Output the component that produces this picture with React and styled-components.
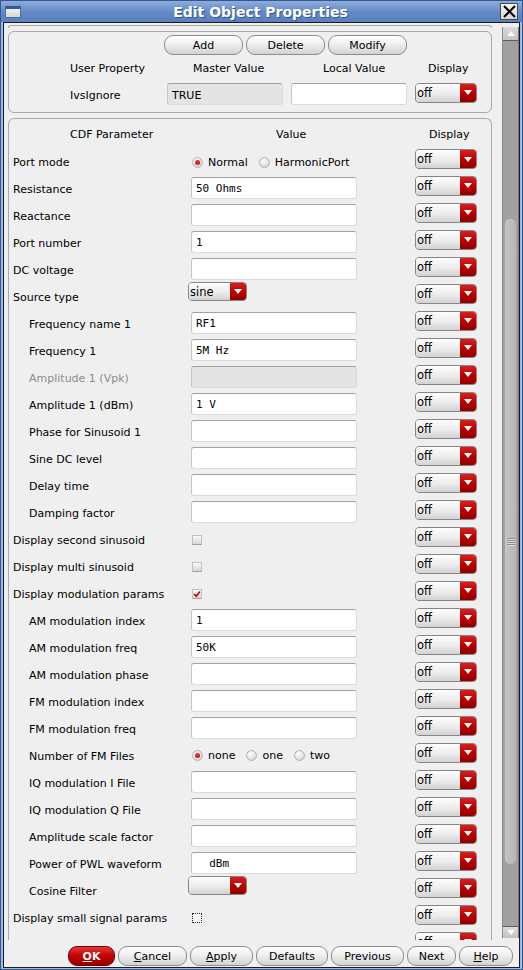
import React from 'react'
import styled, { createGlobalStyle, css } from 'styled-components'

const GlobalStyle = createGlobalStyle`
  html, body { margin: 0; padding: 0; }
  body {
    background: #efefef;
    font-family: "DejaVu Sans", "Liberation Sans", sans-serif;
    font-size: 11px;
    color: #000;
  }
  * { box-sizing: border-box; }
`

const Window = styled.div`
  width: 523px;
  height: 970px;
  display: flex;
  flex-direction: column;
  border: 1px solid #33578f;
  background: #9bb8e6;
  overflow: hidden;
`

const TitleBar = styled.div`
  height: 21px;
  flex: none;
  display: flex;
  align-items: center;
  padding: 0 4px 0 4px;
  background: linear-gradient(#8eacdc, #6388c6 55%, #5a80bf);
`

const WinIcon = styled.div`
  width: 16px;
  height: 12px;
  flex: none;
  border: 1px solid #4a6ea8;
  border-top: 3px solid #30599e;
  background: linear-gradient(#eef1ec, #d3dad0);
`

const Title = styled.div`
  flex: 1;
  text-align: center;
  color: #fff;
  font-weight: bold;
  font-size: 14px;
  text-shadow: 1px 1px 0 #33558c;
`

const CloseBox = styled.div`
  width: 18px;
  height: 17px;
  flex: none;
  display: flex;
  align-items: center;
  justify-content: center;
  background: linear-gradient(#f4f4f4, #d6d6d6);
  border: 1px solid #4a4a4a;
`

const Client = styled.div`
  flex: 1;
  min-height: 0;
  display: flex;
  flex-direction: column;
  margin: 0 2px 1px;
  border: 1px solid #1b1b1b;
  background: #efefef;
`

const Main = styled.div`
  flex: 1;
  min-height: 0;
  display: flex;
`

const Viewport = styled.div`
  flex: 1;
  overflow: hidden;
  padding: 2px 0 0 4px;
`

const TopEdge = styled.div`
  width: 484px;
  height: 3px;
  border: 1px solid #a9a9a9;
  border-bottom: none;
  border-radius: 5px 5px 0 0;
`

const Group = styled.div`
  width: 484px;
  border: 1px solid #a9a9a9;
  border-radius: 6px;
  margin-top: ${p => p.$top}px;
  padding: ${p => p.$pad};
  ${p => p.$open && css`
    border-bottom: none;
    border-radius: 6px 6px 0 0;
  `}
`

const ButtonRow = styled.div`
  display: flex;
  gap: 3px;
  padding-left: 155px;
`

const Pill = styled.button`
  height: 20px;
  width: ${p => p.$w}px;
  flex: none;
  padding: 0;
  font-family: inherit;
  font-size: 11px;
  color: #000;
  border: 1px solid #8d8d8d;
  border-radius: 9px;
  background: linear-gradient(#fefefe, #efefef 45%, #d2d2d2);
  cursor: pointer;
  u { text-decoration: underline; }
  ${p => p.$primary && css`
    color: #fff;
    font-weight: bold;
    border-color: #6e0000;
    background: linear-gradient(#e23a3a, #c40000 50%, #980000);
  `}
`

const PropGrid = styled.div`
  display: grid;
  grid-template-columns: 150px 116px 116px 62px;
  column-gap: 8px;
  align-items: center;
  height: ${p => p.$h}px;
  margin-top: ${p => p.$top}px;
`

const Head = styled.div`
  padding-left: ${p => p.$shift || 0}px;
  white-space: nowrap;
`

const PropLabel = styled.div`
  padding-left: 61px;
  margin-top: 2px;
`

const CdfRow = styled.div`
  display: grid;
  grid-template-columns: 178px 224px 62px;
  align-items: center;
  height: ${p => p.$h || 27}px;
  padding-left: 4px;
`

const RowLabel = styled.div`
  padding-left: ${p => (p.$indent ? 16 : 0)}px;
  margin-top: 3px;
  white-space: nowrap;
  color: ${p => (p.$disabled ? '#8c8c8c' : '#000')};
`

const Field = styled.div`
  width: ${p => p.$w || 166}px;
  height: 22px;
  display: flex;
  align-items: center;
  padding: 2px 4px 0;
  white-space: pre;
  font-family: ${p => (p.$sans ? '"DejaVu Sans", sans-serif' : '"DejaVu Sans Mono", monospace')};
  font-size: 11px;
  background: ${p => (p.$disabled ? '#e4e4e4' : '#fff')};
  border: 1px solid #dadada;
  border-top-color: #a2a2a2;
  border-left-color: #c6c6c6;
  border-radius: 3px;
`

const Combo = styled.div`
  width: ${p => p.$w}px;
  height: ${p => p.$h}px;
  display: flex;
  margin-bottom: ${p => p.$lift}px;
  margin-left: ${p => p.$nudge || 0}px;
  border: 1px solid #868686;
  border-radius: 4px;
  overflow: hidden;
`

const ComboText = styled.div`
  flex: 1;
  display: flex;
  align-items: center;
  padding-left: 1px;
  font-size: 11.5px;
  background: linear-gradient(#fdfdfd, #ececec 55%, #d2d2d2);
`

const ComboArrow = styled.div`
  width: 16px;
  display: flex;
  align-items: center;
  justify-content: center;
  background: linear-gradient(#d92020, #b80000 55%, #900000);
`

const Options = styled.div`
  display: flex;
  align-items: center;
  margin: 2px 0 0 1px;
`

const Option = styled.label`
  display: flex;
  align-items: center;
  gap: 5px;
  margin-right: 11px;
`

const Radio = styled.span`
  width: 11px;
  height: 11px;
  flex: none;
  border-radius: 50%;
  border: 1px solid #b4b4b4;
  background: radial-gradient(circle at 40% 35%, #ffffff, #e0e0e0 60%, #bdbdbd);
  display: flex;
  align-items: center;
  justify-content: center;
  &::after {
    content: '';
    width: 5px;
    height: 5px;
    border-radius: 50%;
    background: ${p => (p.$on ? 'radial-gradient(circle at 40% 35%, #ff3030, #c00000)' : 'transparent')};
  }
`

const Check = styled.span`
  width: 10px;
  height: 10px;
  margin: 2px 0 0 1px;
  display: flex;
  align-items: center;
  justify-content: center;
  background: linear-gradient(#fbfbfb, #d6d6d6);
  border: 1px solid #c0c0c0;
  border-bottom-color: #a2a2a2;
  ${p => p.$focus && css`
    border: 1px dotted #222;
    background: #f6f6f6;
  `}
`

const ScrollBar = styled.div`
  width: 17px;
  flex: none;
  margin: 4px 0 2px;
  border-left: 1px solid #8c8c8c;
  border-right: 1px solid #7a7a7a;
  display: flex;
  flex-direction: column;
`

const Arrow = styled.div`
  height: ${p => p.$h}px;
  flex: none;
  display: flex;
  align-items: center;
  justify-content: center;
  background: linear-gradient(#dcdcdc, #c2c2c2);
  border-${p => (p.$down ? 'top' : 'bottom')}: 1px solid #5e5e5e;
`

const Track = styled.div`
  flex: 1;
  padding-top: 177px;
  background: #a0a0a0;
`

const Thumb = styled.div`
  height: 647px;
  margin: 0 1px;
  border-radius: 7px;
  background: linear-gradient(90deg, #c4c4c4, #b6b6b6);
  border: 1px solid #a4a4a4;
  display: flex;
  flex-direction: column;
  align-items: center;
  justify-content: center;
  gap: 1px;
`

const Grip = styled.span`
  width: 8px;
  height: 1px;
  background: #8a8a8a;
  box-shadow: 0 1px 0 #e0e0e0;
`

const ButtonBar = styled.div`
  height: 27px;
  flex: none;
  display: flex;
  justify-content: flex-end;
  align-items: flex-start;
  gap: 3px;
  padding: 6px 6px 0 0;
`

const Tri = ({ up }) => (
  <svg width="8" height="5" viewBox="0 0 8 5">
    <path d={up ? 'M0 5h8L4 0z' : 'M0 0h8L4 5z'} fill="#fff" />
  </svg>
)

const Dropdown = ({ value = 'off', w = 62, h = 20, lift = 4, nudge }) => (
  <Combo $w={w} $h={h} $lift={lift} $nudge={nudge}>
    <ComboText>{value}</ComboText>
    <ComboArrow><Tri /></ComboArrow>
  </Combo>
)

const Tick = () => (
  <svg width="11" height="10" viewBox="0 0 11 10">
    <path d="M1.5 5 L4.5 8 L9.5 1.5" stroke="#c80000" strokeWidth="2.2" fill="none" />
  </svg>
)

const rows = [
  { label: 'Port mode', kind: 'radio', options: ['Normal', 'HarmonicPort'] },
  { label: 'Resistance', value: '50 Ohms' },
  { label: 'Reactance' },
  { label: 'Port number', value: '1' },
  { label: 'DC voltage' },
  { label: 'Source type', kind: 'select', value: 'sine' },
  { label: 'Frequency name 1', indent: true, value: 'RF1' },
  { label: 'Frequency 1', indent: true, value: '5M Hz' },
  { label: 'Amplitude 1 (Vpk)', indent: true, disabled: true },
  { label: 'Amplitude 1 (dBm)', indent: true, value: '1 V' },
  { label: 'Phase for Sinusoid 1', indent: true },
  { label: 'Sine DC level', indent: true },
  { label: 'Delay time', indent: true },
  { label: 'Damping factor', indent: true },
  { label: 'Display second sinusoid', kind: 'check' },
  { label: 'Display multi sinusoid', kind: 'check' },
  { label: 'Display modulation params', kind: 'check', checked: true },
  { label: 'AM modulation index', indent: true, value: '1' },
  { label: 'AM modulation freq', indent: true, value: '50K' },
  { label: 'AM modulation phase', indent: true },
  { label: 'FM modulation index', indent: true },
  { label: 'FM modulation freq', indent: true },
  { label: 'Number of FM Files', indent: true, kind: 'radio', options: ['none', 'one', 'two'] },
  { label: 'IQ modulation I File', indent: true },
  { label: 'IQ modulation Q File', indent: true },
  { label: 'Amplitude scale factor', indent: true },
  { label: 'Power of PWL waveform', indent: true, value: '  dBm' },
  { label: 'Cosine Filter', indent: true, kind: 'select', value: '' },
  { label: 'Display small signal params', kind: 'check', focus: true },
  { label: '', kind: 'check' },
]

const ValueCell = ({ row }) => {
  if (row.kind === 'radio') {
    return (
      <Options>
        {row.options.map((o, i) => (
          <Option key={o}><Radio $on={i === 0} />{o}</Option>
        ))}
      </Options>
    )
  }
  if (row.kind === 'select') {
    return <Dropdown value={row.value} w={59} h={19} lift={8} nudge={-3} />
  }
  if (row.kind === 'check') {
    return <Check $focus={row.focus}>{row.checked && <Tick />}</Check>
  }
  return <Field $disabled={row.disabled}>{row.value || ''}</Field>
}

const footer = [
  { text: 'OK', w: 47, primary: true, u: 'O' },
  { text: 'Cancel', w: 69, u: 'C' },
  { text: 'Apply', w: 63, u: 'A' },
  { text: 'Defaults', w: 72 },
  { text: 'Previous', w: 73 },
  { text: 'Next', w: 49 },
  { text: 'Help', w: 54, u: 'H' },
]

export default function App() {
  return (
    <>
      <GlobalStyle />
      <Window>
        <TitleBar>
          <WinIcon />
          <Title>Edit Object Properties</Title>
          <CloseBox>
            <svg width="13" height="13" viewBox="0 0 13 13">
              <path d="M1 1L12 12M12 1L1 12" stroke="#000" strokeWidth="2" />
            </svg>
          </CloseBox>
        </TitleBar>
        <Client>
          <Main>
            <Viewport>
              <TopEdge />
              <Group $top={3} $pad="3px 0 6px">
                <ButtonRow>
                  <Pill $w={79}>Add</Pill>
                  <Pill $w={79}>Delete</Pill>
                  <Pill $w={79}>Modify</Pill>
                </ButtonRow>
                <PropGrid $h={20} $top={3}>
                  <Head $shift={61}>User Property</Head>
                  <Head $shift={26}>Master Value</Head>
                  <Head $shift={32}>Local Value</Head>
                  <Head $shift={13}>Display</Head>
                </PropGrid>
                <PropGrid $h={24} $top={4}>
                  <PropLabel>IvsIgnore</PropLabel>
                  <Field $w={116} $sans $disabled>TRUE</Field>
                  <Field $w={116} />
                  <Dropdown lift={3} />
                </PropGrid>
              </Group>
              <Group $top={5} $pad="2px 0 0" $open>
                <CdfRow $h={27}>
                  <Head $shift={57}>CDF Parameter</Head>
                  <Head $shift={85}>Value</Head>
                  <Head $shift={14}>Display</Head>
                </CdfRow>
                {rows.map((row, i) => (
                  <CdfRow key={i} $h={i === 0 ? 26 : 27}>
                    <RowLabel $indent={row.indent} $disabled={row.disabled}>{row.label}</RowLabel>
                    <ValueCell row={row} />
                    <Dropdown />
                  </CdfRow>
                ))}
              </Group>
            </Viewport>
            <ScrollBar>
              <Arrow $h={14}><Tri up /></Arrow>
              <Track>
                <Thumb>
                  <Grip /><Grip /><Grip /><Grip />
                </Thumb>
              </Track>
              <Arrow $h={12} $down><Tri /></Arrow>
            </ScrollBar>
          </Main>
          <ButtonBar>
            {footer.map(b => (
              <Pill key={b.text} $w={b.w} $primary={b.primary}>
                {b.u ? <><u>{b.u}</u>{b.text.slice(1)}</> : b.text}
              </Pill>
            ))}
          </ButtonBar>
        </Client>
      </Window>
    </>
  )
}
